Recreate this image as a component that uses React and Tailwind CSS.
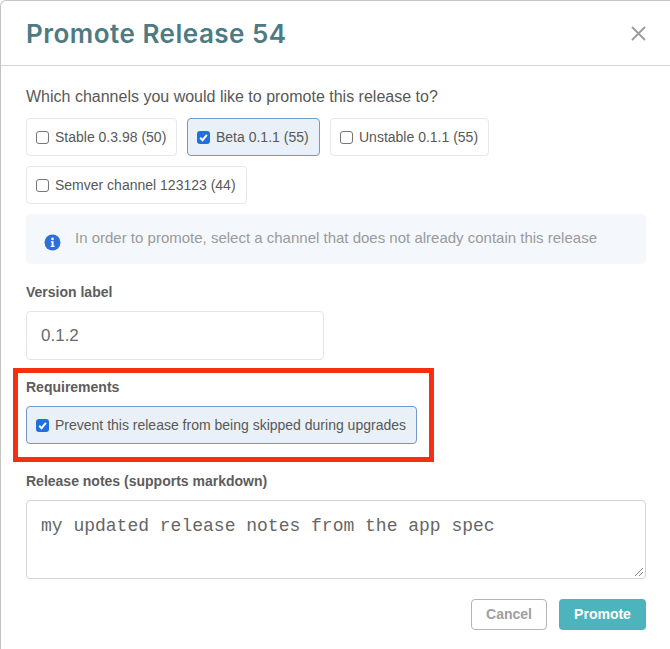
const sans = "font-['Liberation_Sans',Arial,sans-serif]";

function Box({ checked }) {
  return checked ? (
    <span className="flex h-[13px] w-[13px] shrink-0 items-center justify-center rounded-[3px] bg-[#1f6fe0]">
      <svg width="11" height="11" viewBox="0 0 11 11" fill="none">
        <path d="M2.2 5.8 L4.5 8.2 L8.9 2.8" stroke="#fff" strokeWidth="2" />
      </svg>
    </span>
  ) : (
    <span className="h-[13px] w-[13px] shrink-0 rounded-[3px] border border-[#767676] bg-white" />
  );
}

function Chip({ label, checked, className }) {
  return (
    <div
      className={
        "flex h-[38px] items-center gap-[6px] rounded-[4px] border pl-[9px] text-[14px] leading-none text-[#585858] " +
        (checked ? "border-[#6f9bc4] bg-[#e9f0f7] " : "border-[#e8e8e8] bg-white ") +
        className
      }
    >
      <Box checked={checked} />
      <span className="whitespace-nowrap">{label}</span>
    </div>
  );
}

function Label({ children }) {
  return <div className="text-[14px] font-bold leading-[16px] text-[#5d5d5d]">{children}</div>;
}

export default function App() {
  return (
    <div className={"relative h-[649px] w-[670px] overflow-hidden rounded-tl-[6px] border-l border-t border-[#c4c4c4] bg-white " + sans}>
      <header className="flex h-[65px] items-center justify-between border-b border-[#d5d5d5] pl-[25px] pr-[24px]">
        <h1 className="pt-[2px] font-['Inter',sans-serif] text-[26px] font-semibold leading-none tracking-[0.5px] text-[#4d7a83]">
          Promote Release 54
        </h1>
        <svg width="15" height="15" viewBox="0 0 15 15" fill="none">
          <path d="M1 1 L14 14 M14 1 L1 14" stroke="#9c9c9c" strokeWidth="1.8" />
        </svg>
      </header>

      <main className="px-[25px]">
        <p className="mt-[21px] text-[16px] leading-[19px] text-[#585858]">
          Which channels you would like to promote this release to?
        </p>

        <div className="mt-[12px] flex flex-wrap gap-x-[10px] gap-y-[10px]">
          <Chip label="Stable 0.3.98 (50)" className="w-[151px]" />
          <Chip label="Beta 0.1.1 (55)" checked className="w-[133px]" />
          <Chip label="Unstable 0.1.1 (55)" className="w-[159px]" />
          <Chip label="Semver channel 123123 (44)" className="w-[221px]" />
        </div>

        <div className="mt-[10px] flex h-[50px] w-[620px] items-center gap-[14px] rounded-[4px] bg-[#f4f8fc] pb-[2px] pl-[18px] text-[15px] text-[#9a9a9a]">
          <svg width="17" height="17" viewBox="0 0 17 17" className="mt-[8px] shrink-0">
            <circle cx="8.5" cy="8.5" r="8" fill="#2f6fd8" />
            <circle cx="8.5" cy="4.9" r="1.3" fill="#fff" />
            <path d="M6.9 7.2 H9.6 V11.8 H10.6 V13 H6.7 V11.8 H7.7 V8.4 H6.9 Z" fill="#fff" />
          </svg>
          <span className="whitespace-nowrap">In order to promote, select a channel that does not already contain this release</span>
        </div>

        <div className="mt-[20px]">
          <Label>Version label</Label>
        </div>
        <div className="mt-[11px] flex h-[49px] w-[298px] items-center rounded-[4px] border border-[#e4e4e4] pl-[14px] text-[17px] text-[#6a6a6a]">
          0.1.2
        </div>

        <div className="mt-[19px]">
          <Label>Requirements</Label>
        </div>
        <Chip
          label="Prevent this release from being skipped during upgrades"
          checked
          className="mt-[11px] w-[391px]"
        />

        <div className="mt-[29px]">
          <Label>Release notes (supports markdown)</Label>
        </div>
        <div className="relative mt-[11px] h-[79px] w-[620px] rounded-[4px] border border-[#d2d2d2] pl-[14px] pt-[14px] font-['Liberation_Mono',monospace] text-[18px] leading-[22px] text-[#666666]">
          my updated release notes from the app spec
          <svg width="10" height="10" viewBox="0 0 10 10" className="absolute bottom-[1px] right-[1px]" fill="none">
            <path d="M1 9 L9 1 M5 9 L9 5" stroke="#8a8a8a" strokeWidth="1" />
          </svg>
        </div>

        <div className="mt-[20px] flex w-[620px] justify-end gap-[12px] text-[14px] font-bold">
          <div className="flex h-[31px] w-[76px] items-center justify-center rounded-[4px] border border-[#b5b5b5] text-[#a0a0a0]">
            Cancel
          </div>
          <div className="flex h-[31px] w-[87px] items-center justify-center rounded-[4px] bg-[#4db3bc] text-white">
            Promote
          </div>
        </div>
      </main>

      <div className="pointer-events-none absolute left-[12px] top-[367px] h-[94px] w-[421px] border-[5px] border-[#f5300f]" />
    </div>
  );
}
